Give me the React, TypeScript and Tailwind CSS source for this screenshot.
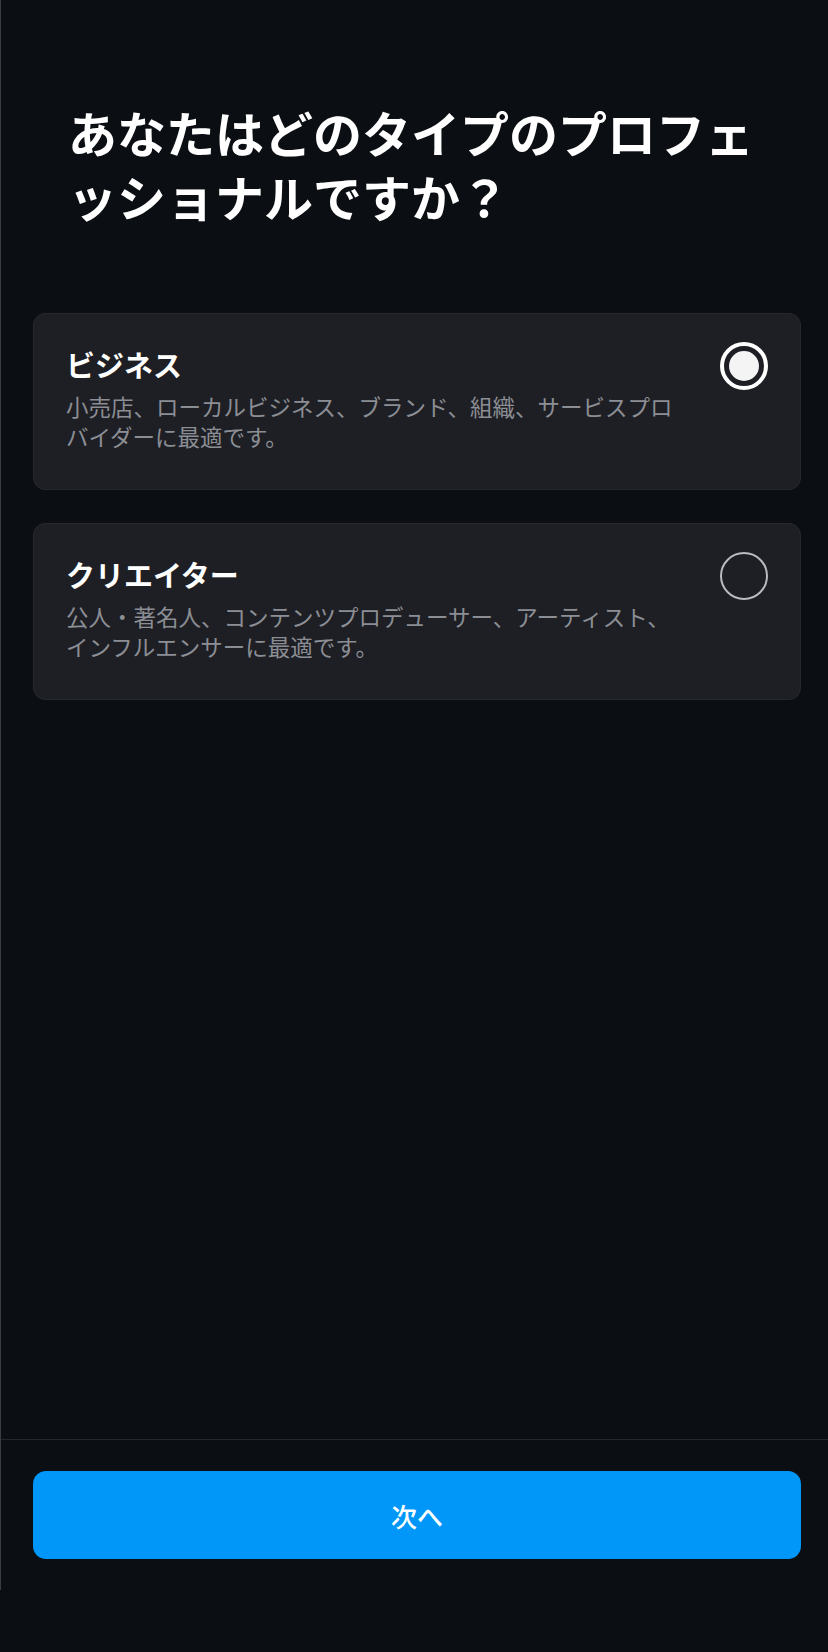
import { useState } from 'react';

type Option = {
    id: string;
    title: string;
    lines: string[];
};

const options: Option[] = [
    {
        id: 'business',
        title: 'ビジネス',
        lines: ['小売店、ローカルビジネス、ブランド、組織、サービスプロ', 'バイダーに最適です。'],
    },
    {
        id: 'creator',
        title: 'クリエイター',
        lines: ['公人・著名人、コンテンツプロデューサー、アーティスト、', 'インフルエンサーに最適です。'],
    },
];

const Radio = ({ checked }: { checked: boolean }) => {
    if (checked) {
        return (
            <div className="w-[48px] h-[48px] shrink-0 rounded-full border-[4px] border-white flex items-center justify-center">
                <div className="w-[30px] h-[30px] rounded-full bg-[#f4f4f5]" />
            </div>
        );
    }

    return <div className="w-[48px] h-[48px] shrink-0 rounded-full border-[2px] border-[#b9bbbf]" />;
};

export default function App() {
    const [selected, setSelected] = useState('business');

    return (
        <div className="w-[828px] h-[1652px] bg-[#0b0e13] font-['Noto_Sans_CJK_JP','Noto_Sans',sans-serif]">
            <div className="h-[1590px] border-l border-[#3a3d42] flex flex-col">
                <div className="flex-1 pl-[32px] pr-[27px]">
                    <h1 className="pt-[100px] pl-[35px] text-[49px] leading-[64px] font-bold text-white">
                        あなたはどのタイプのプロフェ
                        <br />
                        ッショナルですか？
                    </h1>
                    <div className="mt-[85px] flex flex-col gap-[33px]">
                        {options.map((option) => (
                            <button
                                key={option.id}
                                onClick={() => setSelected(option.id)}
                                className="w-full text-left rounded-[12px] bg-[#1e1f24] border border-[#27282d] pl-[32px] pr-[32px] pt-[28px] pb-[38px] flex justify-between items-start"
                            >
                                <div className="pt-[4px]">
                                    <div className="text-[29px] leading-[36px] font-bold text-white">{option.title}</div>
                                    <div className="mt-[9px] text-[22.5px] leading-[30px] text-[#8b8e94]">
                                        {option.lines.map((line) => (
                                            <div key={line}>{line}</div>
                                        ))}
                                    </div>
                                </div>
                                <Radio checked={selected === option.id} />
                            </button>
                        ))}
                    </div>
                </div>
                <div className="border-t border-[#24272c] pl-[32px] pr-[27px] pt-[31px] pb-[31px]">
                    <button className="w-full h-[88px] rounded-[13px] bg-[#0097f8] text-white text-[26px] font-medium flex items-center justify-center">
                        次へ
                    </button>
                </div>
            </div>
        </div>
    );
}
